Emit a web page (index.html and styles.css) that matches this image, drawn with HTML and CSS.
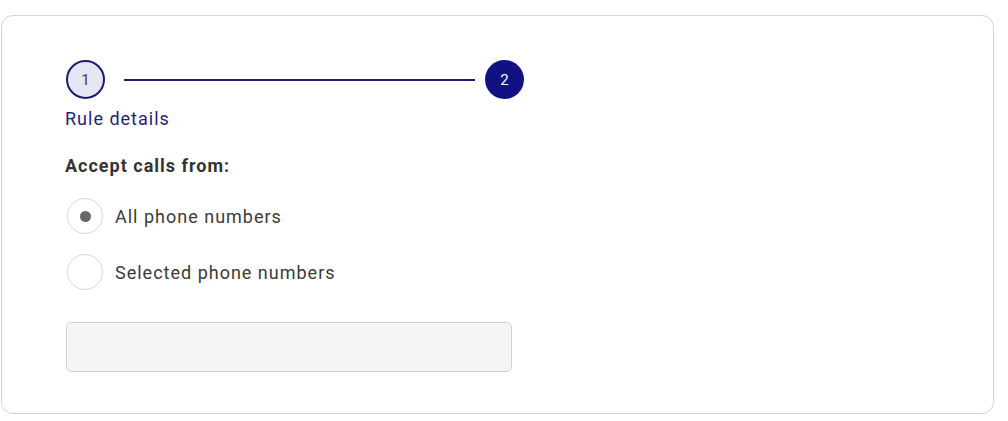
FILE: index.html
```html
<!DOCTYPE html>
<html>
<head>
<meta charset="utf-8">
<link rel="stylesheet" href="styles.css">
</head>
<body>
<div class="card">
  <div class="stepper">
    <div class="step step-done">1</div>
    <div class="step-line"></div>
    <div class="step step-active">2</div>
  </div>
  <div class="step-label">Rule details</div>
  <div class="section-title">Accept calls from:</div>
  <div class="radios">
    <div class="radio-row">
      <span class="radio checked"><span class="dot"></span></span>
      <span class="radio-label">All phone numbers</span>
    </div>
    <div class="radio-row">
      <span class="radio"></span>
      <span class="radio-label">Selected phone numbers</span>
    </div>
  </div>
  <div class="input"></div>
</div>
</body>
</html>
```
FILE: styles.css
```css
* { box-sizing: border-box; }
html, body { margin: 0; padding: 0; background: #fff; }
body { font-family: Roboto, "Liberation Sans", sans-serif; color: #333; }
.card {
  margin: 15px 0 0 1px;
  width: 993px;
  height: 399px;
  border: 1px solid #d4d4d4;
  border-radius: 12px;
  padding: 44px 0 0 63px;
}
.stepper { display: flex; align-items: center; height: 39px; }
.step {
  width: 39px; height: 39px; border-radius: 50%;
  display: flex; align-items: center; justify-content: center;
  font-size: 15px;
}
.step-done {
  margin-left: 1px;
  border: 2px solid #1c1c72;
  background: #e5e5f4;
  color: #3a3a6e;
}
.step-active {
  background: #111184;
  color: #fff;
}
.step-line {
  width: 351px; height: 2px; background: #1c1c72;
  margin: 0 10px 0 19px;
}
.step-label {
  margin-top: 10px;
  font-size: 18px; line-height: 20px; letter-spacing: 1px;
  color: #23237a;
}
.section-title {
  margin-top: 27px;
  font-size: 18px; line-height: 20px; font-weight: 700; letter-spacing: 1px;
  color: #333;
}
.radios { margin-top: 22px; display: flex; flex-direction: column; gap: 20px; }
.radio-row { display: flex; align-items: center; height: 36px; }
.radio {
  margin-left: 2px;
  width: 36px; height: 36px; border-radius: 50%;
  border: 1px solid #d6d6d6;
  display: flex; align-items: center; justify-content: center;
}
.dot { width: 11px; height: 11px; border-radius: 50%; background: #666; }
.radio-label { margin-left: 12px; font-size: 18px; letter-spacing: 1px; color: #3a3a3a; }
.input {
  margin-top: 32px; margin-left: 1px;
  width: 446px; height: 50px;
  background: #f5f5f5;
  border: 1px solid #d2d2d2;
  border-radius: 5px;
}
```
